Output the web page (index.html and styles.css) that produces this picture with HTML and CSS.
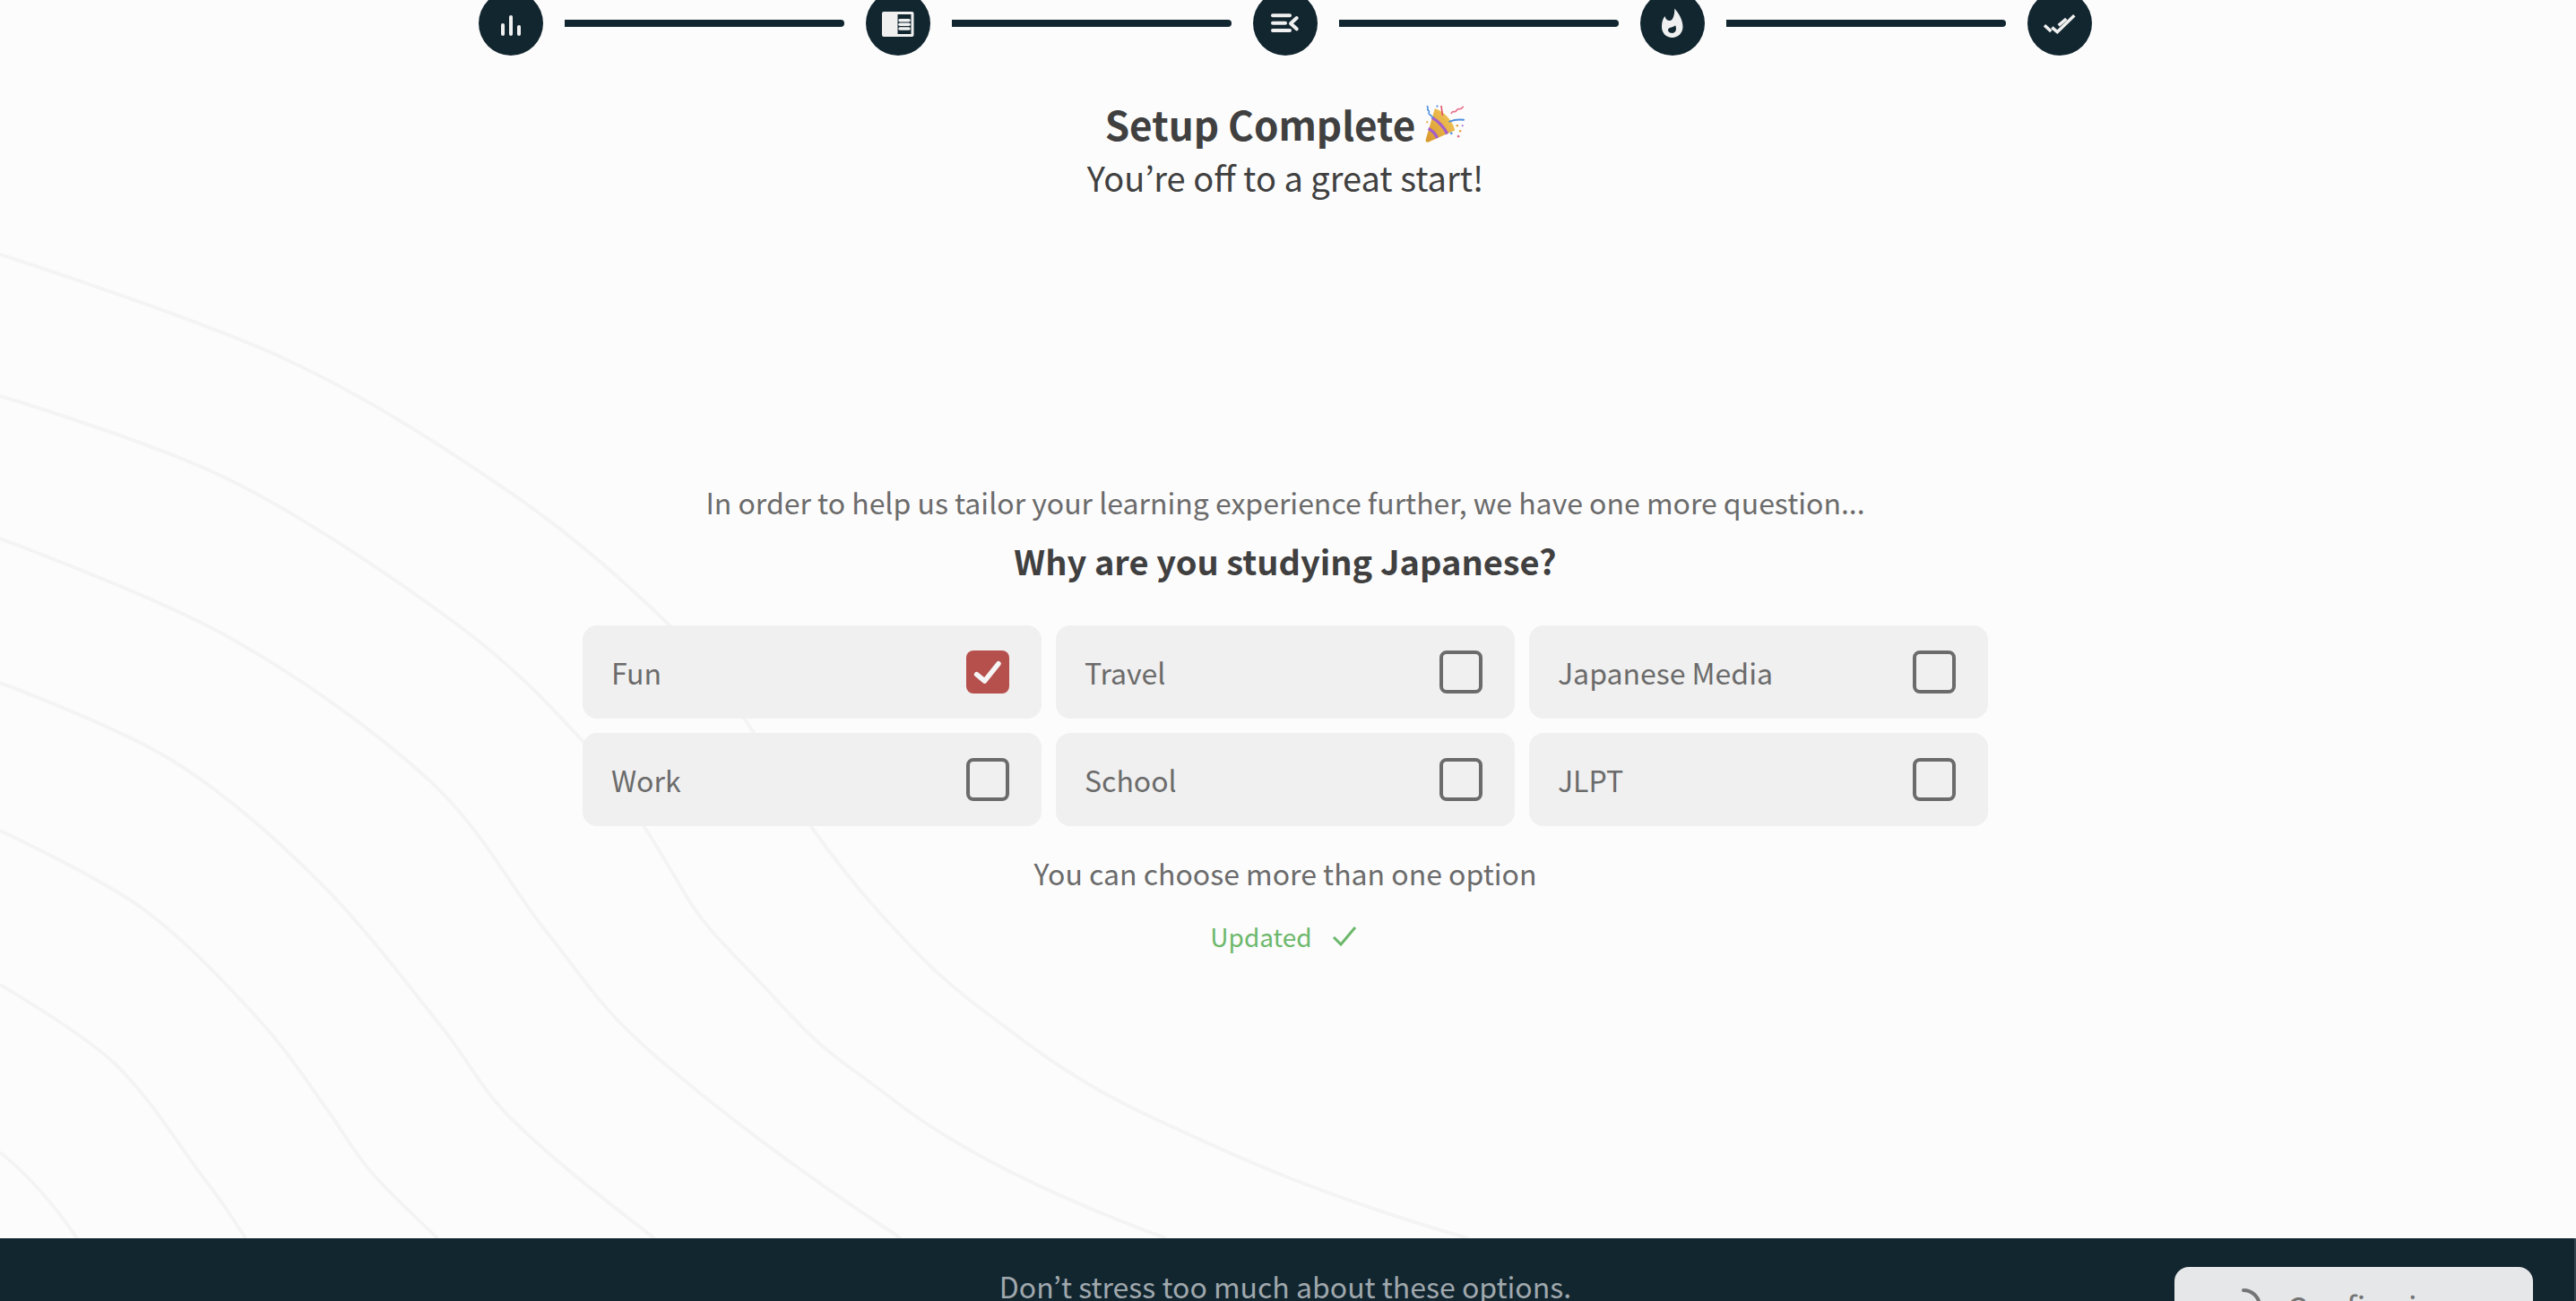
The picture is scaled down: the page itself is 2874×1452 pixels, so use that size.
FILE: index.html

```html
<!DOCTYPE html>
<html lang="en">
<head>
  <meta charset="UTF-8" />
  <meta name="viewport" content="width=device-width, initial-scale=1.0"/>
  <title>Setup Complete</title>
  <link rel="stylesheet" href="styles.css">
</head>
<body>
  <svg class="bg-lines" viewBox="0 0 2874 1452" aria-hidden="true">
    <path d="M0 284S223 356 319 401S503 504 574 553S701 653 746 697S815 781 842 819S880 887 906 924S968 1005 1000 1039S1053 1095 1100 1130S1193 1204 1283 1246S1460 1330 1638 1382"/>
    <path d="M0 442S170 493 255 535S444 648 510 697S616 790 650 827S698 891 717 920S742 960 765 999S815 1060 870 1120S935 1180 1000 1230S1160 1330 1301 1382"/>
    <path d="M0 601S175 666 255 711S418 815 478 870S570 991 612 1043S668 1124 733 1180S880 1300 1005 1382"/>
    <path d="M0 762S131 811 191 848S307 935 357 985S455 1099 491 1144S534 1213 574 1252S650 1320 730 1382"/>
    <path d="M0 927S111 979 159 1014S253 1099 287 1136S343 1208 364 1237S394 1285 415 1309S450 1345 488 1382"/>
    <path d="M0 1099S91 1152 128 1187S199 1277 223 1309S250 1345 274 1382"/>
    <path d="M0 1286Q45 1322 86 1382"/>
  </svg>

  <main class="content">
    <div class="stepper">
      <span class="step">
        <svg viewBox="0 0 72 72"><g class="ico-line"><path d="M27 38v10"/><path d="M36 29v19"/><path d="M45 40v8" /></g></svg>
      </span>
      <span class="step-line"></span>
      <span class="step">
        <svg viewBox="0 0 72 72"><rect class="ico-fill" x="18" y="23" width="35.5" height="28" rx="2"/><rect class="ico-dark" x="35.5" y="26" width="15" height="22"/><g class="ico-line thin"><path d="M38 32.7h10"/><path d="M38 37.3h10"/><path d="M38 42h10"/></g></svg>
      </span>
      <span class="step-line"></span>
      <span class="step">
        <svg viewBox="0 0 72 72"><g class="ico-line"><path d="M22 27.3h19"/><path d="M22 35.7h14"/><path d="M22 44h19"/><path d="M48.7 30L42 36.2l6.7 6.1" /></g></svg>
      </span>
      <span class="step-line"></span>
      <span class="step">
        <svg viewBox="0 0 72 72"><path class="ico-fill" fill-rule="evenodd" d="M38.3 19.5C42 24 47.5 31 47.5 40C47.5 47 42 52 35.7 52C29 52 24 47 24 40C24 35 25 31 27.5 28C28 31 30 33 33 33C37 33 38.5 25 38.3 19.5ZM39 38C39 40 34 40 31.5 42C30 44 32 47 35.7 47C39 47 41.5 43 39 38Z"/></svg>
      </span>
      <span class="step-line"></span>
      <span class="step">
        <svg viewBox="0 0 72 72"><g class="ico-line thin butt"><path d="M19 38.3l7.3 6.7"/><path d="M27.3 40.7l6 5L52.3 27.3"/><path d="M34.7 38.3L43.3 31"/></g></svg>
      </span>
    </div>

    <h1 class="title">Setup Complete
      <svg class="party" viewBox="0 0 140 130">
        <defs>
          <linearGradient id="cone" x1="0" y1="1" x2="1" y2="0"><stop offset="0" stop-color="#d9962c"/><stop offset="1" stop-color="#f3cc5e"/></linearGradient>
        </defs>
        <path d="M6 116C2 128 10 130 18 126L104 88C100 60 66 20 36 14Z" fill="url(#cone)"/>
        <path d="M26 44C44 54 68 76 78 100M14 82C26 88 38 100 44 114" fill="none" stroke="#a55fc9" stroke-width="10"/>
        <g fill="none" stroke-width="5" stroke-linecap="round">
          <path d="M10 6c8 4-4 10 4 14s-4 10 4 14s6 8 12 10" stroke="#4f8fe0"/>
          <path d="M58 6l4 30" stroke="#e0566a"/>
          <path d="M92 30c6-14 12 2 18-10s10 4 22-12" stroke="#e8708a"/>
          <path d="M86 58c14-6 32-8 48-6" stroke="#4f8fe0" stroke-width="6"/>
        </g>
        <g>
          <circle cx="44" cy="6" r="3.5" fill="#4f8fe0"/>
          <circle cx="112" cy="72" r="4" fill="#e8a33e"/>
          <circle cx="92" cy="98" r="4" fill="#4f8fe0"/>
          <circle cx="122" cy="90" r="4" fill="#e8a33e"/>
          <circle cx="116" cy="108" r="4" fill="#e8708a"/>
          <circle cx="130" cy="72" r="3" fill="#a55fc9"/>
          <circle cx="10" cy="60" r="3.5" fill="#e8a33e"/>
        </g>
      </svg>
    </h1>
    <p class="subtitle">You’re off to a great start!</p>

    <p class="question-intro">In order to help us tailor your learning experience further, we have one more question...</p>
    <h2 class="question">Why are you studying Japanese?</h2>

    <div class="options">
      <div class="option"><span>Fun</span>
        <span class="checkbox checked"><svg viewBox="0 0 48 48"><path d="M11.6 26.7l8.9 7.3L36 14.7"/></svg></span>
      </div>
      <div class="option"><span>Travel</span><span class="checkbox"></span></div>
      <div class="option"><span>Japanese Media</span><span class="checkbox"></span></div>
      <div class="option"><span>Work</span><span class="checkbox"></span></div>
      <div class="option"><span>School</span><span class="checkbox"></span></div>
      <div class="option"><span>JLPT</span><span class="checkbox"></span></div>
    </div>

    <p class="hint">You can choose more than one option</p>
    <p class="updated">Updated
      <svg viewBox="0 0 32 24"><path d="M2 13l8 8L26 2"/></svg>
    </p>
  </main>

  <footer class="footer">
    <span></span>
    <p class="footer-text">Don’t stress too much about these options.<br>You can always change them later.</p>
    <button class="confirm">
      <svg class="spinner" viewBox="0 0 40 40"><path d="M20 2A18 18 0 0 1 38 20"/></svg>
      Confirming...
    </button>
  </footer>
</body>
</html>
```

FILE: styles.css

```css
html,body{height:100%;}
body{margin:0;height:100vh;overflow:hidden;display:flex;flex-direction:column;position:relative;background:#fcfcfc;color:#404040;font-family:"Noto Sans CJK JP","Noto Sans",sans-serif;}
p,h1,h2{margin:0;}

/* decorative lines behind everything */
.bg-lines{position:absolute;top:0;left:0;width:2874px;height:1452px;fill:none;stroke:#f4f4f4;stroke-width:4;}

.content{position:relative;flex:1;min-height:0;padding-right:6px;display:flex;flex-direction:column;align-items:center;text-align:center;}

/* Stepper */
.stepper{margin-top:-10px;display:flex;align-items:center;gap:24px;}
.step{width:72px;height:72px;border-radius:50%;background:#122630;flex:none;}
.step svg{display:block;width:72px;height:72px;}
.step-line{width:312px;height:8px;border-radius:0 4px 4px 0;background:#122630;}
.ico-line{fill:none;stroke:#f0f0f0;stroke-width:4;stroke-linecap:round;stroke-linejoin:round;}
.ico-line.thin{stroke-width:3.5;}
.ico-line.butt{stroke-linecap:butt;stroke-linejoin:miter;}
.ico-fill{fill:#f0f0f0;}
.ico-dark{fill:#122630;}

/* Heading */
.title{margin-top:46px;font-size:44px;line-height:60px;font-weight:700;display:flex;align-items:center;gap:10px;}
.party{width:46px;height:44px;flex:none;}
.subtitle{margin-top:2px;font-size:38px;line-height:56px;}

.question-intro{margin-top:309px;font-size:32px;line-height:50px;color:#6b6b6b;}
.question{margin-top:11px;font-size:38px;line-height:60px;font-weight:700;}

/* Options */
.options{margin-top:42px;display:grid;grid-template-columns:repeat(3,512px);gap:16px;}
.option{height:104px;padding:0 36px 0 32px;box-sizing:border-box;border-radius:16px;background:#f0f0f0;display:flex;align-items:center;justify-content:space-between;font-size:32px;color:#6b6b6b;}
.checkbox{width:48px;height:48px;box-sizing:border-box;border:4px solid #6b6b6b;border-radius:8px;flex:none;}
.checkbox.checked{border:none;background:#b5504d;}
.checkbox svg{display:block;width:48px;height:48px;fill:none;stroke:#f5f5f5;stroke-width:5.5;stroke-linecap:round;stroke-linejoin:round;}

.hint{margin-top:27px;font-size:32px;line-height:50px;color:#6b6b6b;}
.updated{margin-top:24px;font-size:28px;line-height:44px;color:#6cb86b;display:flex;align-items:center;gap:22px;}
.updated svg{width:32px;height:24px;fill:none;stroke:#6cb86b;stroke-width:3;}

/* Footer */
.footer{position:relative;flex:none;height:70px;overflow:hidden;box-sizing:border-box;padding:32px 46px 0 42px;background:#122630;border-right:2px solid #33454e;display:grid;grid-template-columns:1fr auto 1fr;align-items:start;}
.footer-text{margin-top:-4px;font-size:32px;line-height:50px;text-align:center;color:#a0a8ad;}
.confirm{justify-self:end;width:400px;height:88px;border:none;border-radius:16px;background:#e6e7e9;color:#757575;font-family:inherit;font-size:36px;display:flex;align-items:center;justify-content:center;gap:28px;}
.spinner{width:40px;height:40px;fill:none;stroke:#757575;stroke-width:4;stroke-linecap:round;}
```
